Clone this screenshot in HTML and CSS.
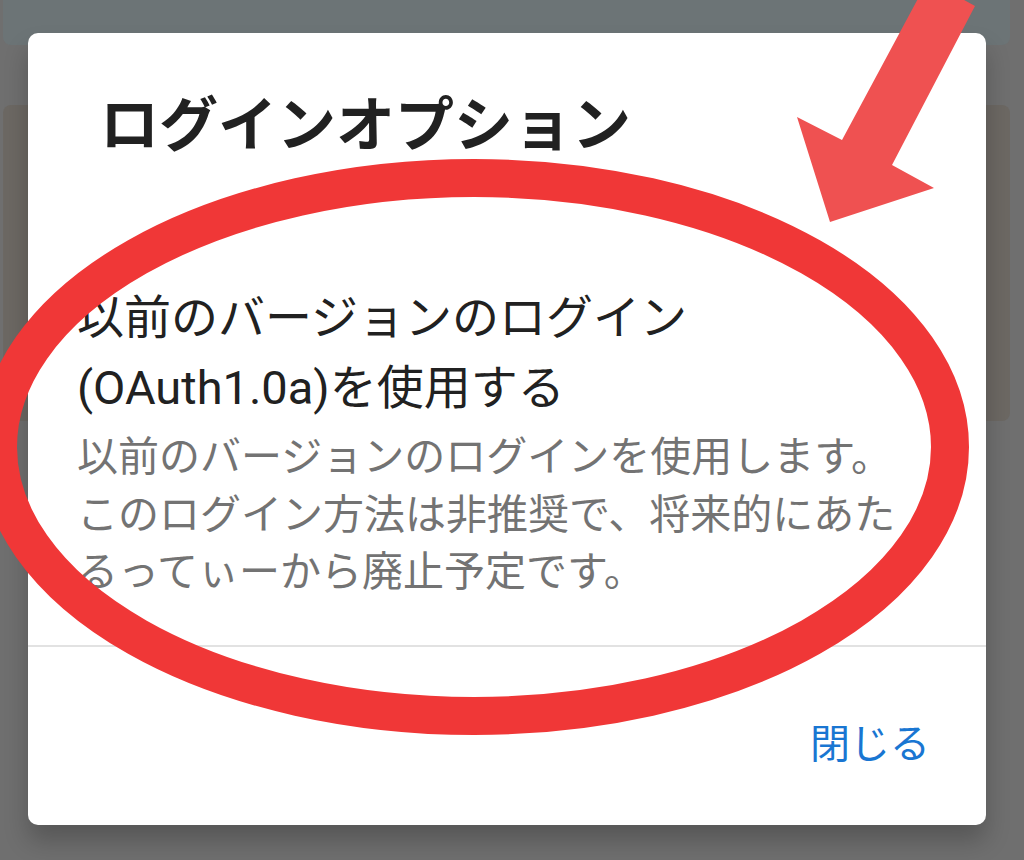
FILE: index.html
```html
<!DOCTYPE html>
<html lang="ja">
<head>
    <meta charset="UTF-8">
    <meta name="viewport" content="width=device-width, initial-scale=1.0">
    <title>ログインオプション</title>
    <link rel="stylesheet" href="styles.css">
</head>
<body>

    <!-- dimmed app screen behind the dialog -->
    <div class="app">
        <div class="app-header"></div>
        <div class="app-card"></div>
    </div>

    <div class="dialog">
        <h2 class="dialog-title">ログインオプション</h2>
        <div class="option">
            <div class="option-label">以前のバージョンのログイン(OAuth1.0a)を使用する</div>
            <div class="option-desc">以前のバージョンのログインを使用します。このログイン方法は非推奨で、将来的にあたるってぃーから廃止予定です。</div>
        </div>
        <div class="dialog-actions">
            <button class="btn-text">閉じる</button>
        </div>
    </div>

    <!-- hand drawn markup on top of the screenshot -->
    <svg class="markup" width="1024" height="860" viewBox="0 0 1024 860">
        <ellipse cx="474" cy="447" rx="476" ry="269" fill="none" stroke="#f03737" stroke-width="38"/>
        <polygon points="928,-20 975,6 892,165 934,188 830,222 797,117 842,140" fill="#ef5151"/>
    </svg>

</body>
</html>
```

FILE: styles.css
```css
body {
    margin: 0;
    padding: 0;
    width: 1024px;
    height: 860px;
    overflow: hidden;
    position: relative;
    background: #6f6f6f;
    font-family: Roboto, "Noto Sans CJK JP", sans-serif;
}

/* App behind the scrim */
.app {
    display: flex;
    flex-direction: column;
    padding: 0 14px 0 3px;
}

.app-header {
    height: 45px;
    background: #6c7476;
    border-radius: 0 0 8px 8px;
}

.app-card {
    margin-top: 60px;
    height: 316px;
    background: #6c6863;
    border-radius: 8px;
}

/* Dialog */
.dialog {
    position: absolute;
    top: 33px;
    left: 28px;
    width: 958px;
    height: 792px;
    background: #ffffff;
    border-radius: 10px;
    box-shadow: 0 16px 24px rgba(0, 0, 0, 0.22);
    display: flex;
    flex-direction: column;
    box-sizing: border-box;
    padding-top: 58px;
}

.dialog-title {
    margin: 0;
    padding-left: 72px;
    font-size: 59px;
    line-height: 70px;
    font-weight: 700;
    color: #212121;
}

.option {
    margin-top: 122px;
    padding: 0 60px 43px 49px;
    border-bottom: 2px solid #e2e2e2;
}

.option-label {
    font-size: 47px;
    line-height: 70px;
    color: #212121;
}

.option-desc {
    margin-top: 6px;
    font-size: 41px;
    line-height: 57.5px;
    color: #737373;
}

.dialog-actions {
    display: flex;
    justify-content: flex-end;
    padding: 78px 56px 0 0;
}

.btn-text {
    border: none;
    background: transparent;
    padding: 0;
    font-family: inherit;
    font-size: 40px;
    line-height: 40px;
    color: #1976d2;
    cursor: pointer;
}

/* Annotation layer */
.markup {
    position: absolute;
    top: 0;
    left: 0;
    pointer-events: none;
}
```
